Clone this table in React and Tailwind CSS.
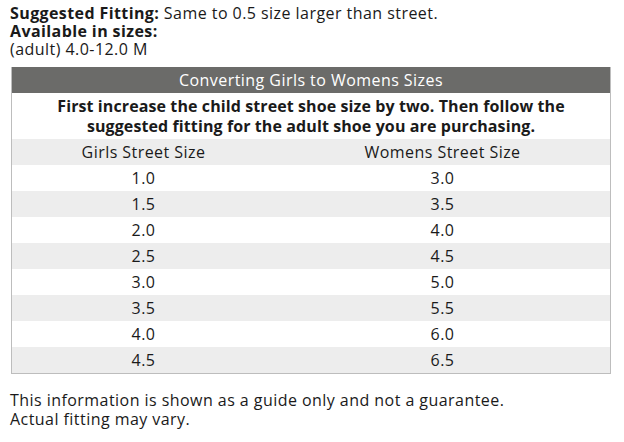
import React from "react";

const rows = [
  ["1.0", "3.0"],
  ["1.5", "3.5"],
  ["2.0", "4.0"],
  ["2.5", "4.5"],
  ["3.0", "5.0"],
  ["3.5", "5.5"],
  ["4.0", "6.0"],
  ["4.5", "6.5"],
];

export default function App() {
  return (
    <div className="w-[624px] h-[442px] bg-white text-[#1a1a1a] font-['Open_Sans',sans-serif] text-[16px] tracking-[0.45px] leading-[18px] px-[10px] pt-[4px]">
      <p>
        <span className="font-bold tracking-[0.4px]">Suggested Fitting:</span> Same to 0.5 size larger than street.
      </p>
      <p className="font-bold tracking-[0.4px]">Available in sizes:</p>
      <p>(adult) 4.0-12.0 M</p>

      <div className="mt-[9px] ml-px w-[600px] border border-[#bdbdbd] border-t-0">
        <div className="h-[26px] bg-[#6b6b69] text-white flex items-center justify-center">
          Converting Girls to Womens Sizes
        </div>
        <div className="h-[46px] flex items-center justify-center text-center font-bold text-[16px] tracking-[0.1px] leading-[20px]">
          First increase the child street shoe size by two. Then follow the
          <br />
          suggested fitting for the adult shoe you are purchasing.
        </div>
        <div className="grid grid-cols-[263px_1fr] h-[26px] items-center bg-[#ededed]">
          <div className="text-center">Girls Street Size</div>
          <div className="text-center">Womens Street Size</div>
        </div>
        {rows.map(([g, w], i) => (
          <div
            key={g}
            className={
              "grid grid-cols-[263px_1fr] h-[26px] items-center " +
              (i % 2 === 1 ? "bg-[#ededed]" : "bg-white")
            }
          >
            <div className="text-center">{g}</div>
            <div className="text-center">{w}</div>
          </div>
        ))}
      </div>

      <p className="mt-[17px] leading-[19px]">This information is shown as a guide only and not a guarantee.</p>
      <p className="leading-[19px]">Actual fitting may vary.</p>
    </div>
  );
}
